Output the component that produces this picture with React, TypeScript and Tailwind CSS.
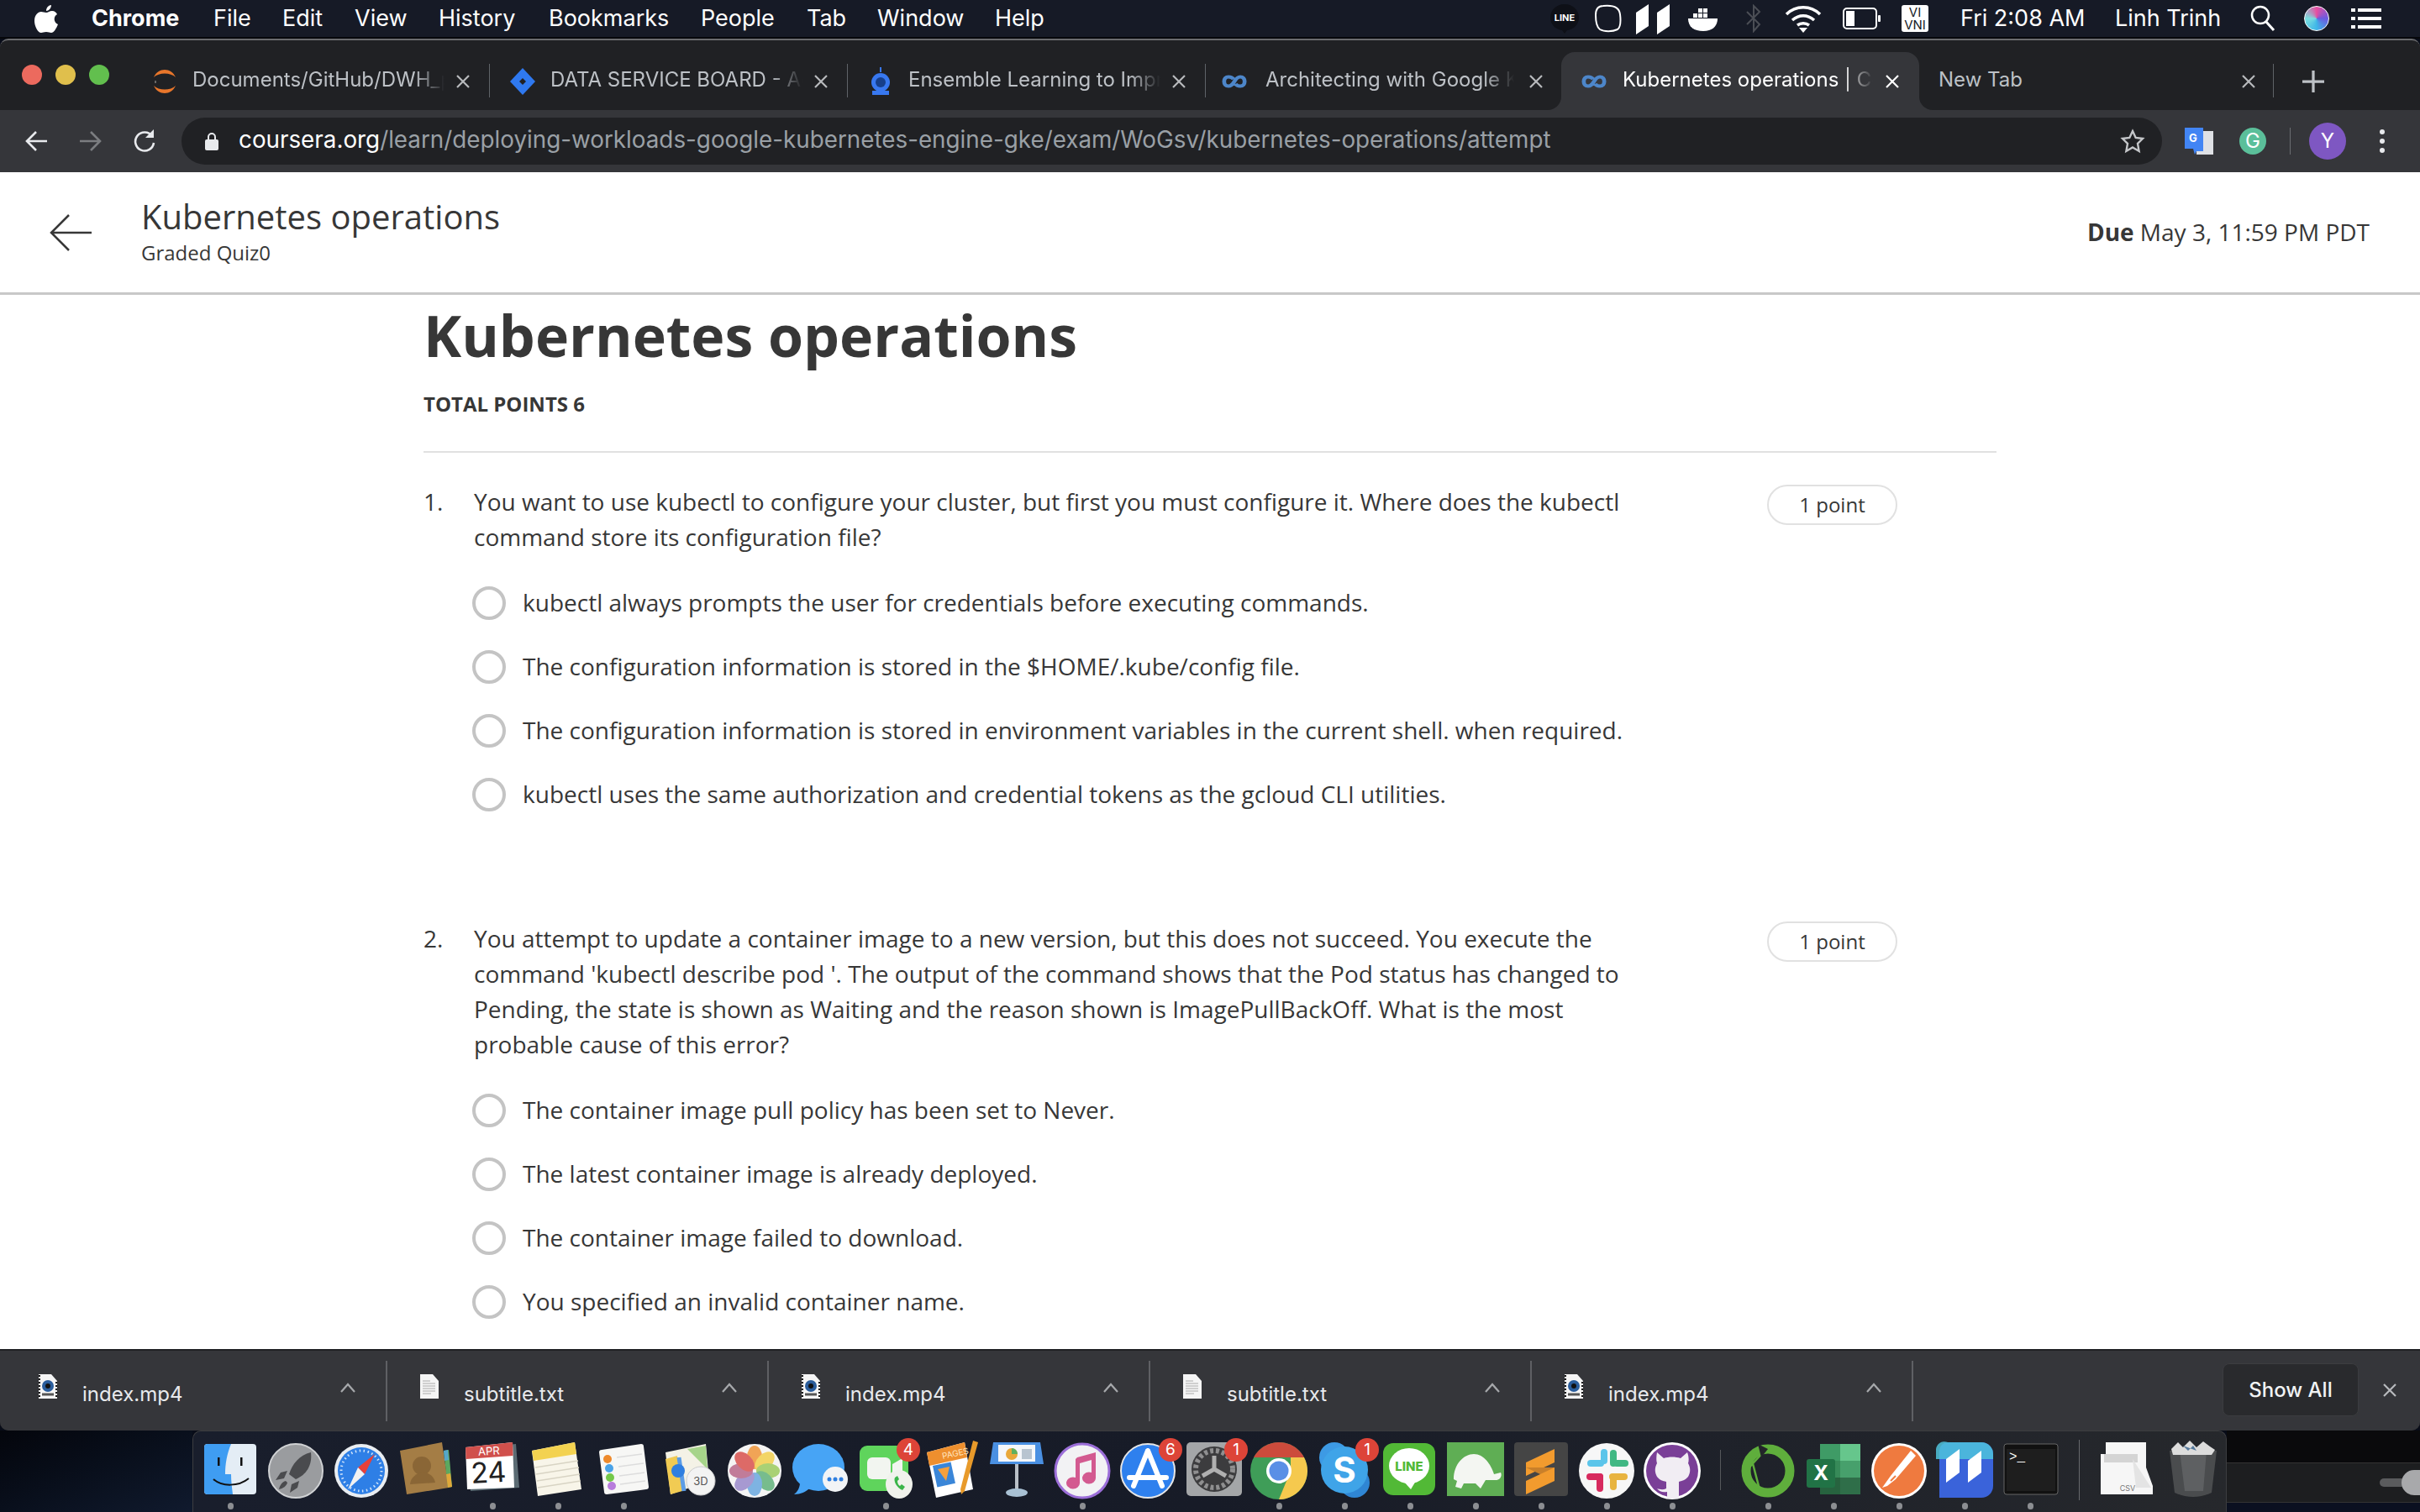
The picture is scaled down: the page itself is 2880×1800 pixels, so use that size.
import type { ReactNode } from 'react'

const sans = 'font-["Inter","Noto_Sans",sans-serif]'

function Ico({ children }: { children: ReactNode }) {
  return <svg viewBox="0 0 68 72" className="w-[68px] h-[72px]">{children}</svg>
}

const dockLeft: { icon: ReactNode; dot?: boolean; badge?: string }[] = [
  { dot: true, icon: <Ico><rect x="3" y="6" width="62" height="60" rx="4" fill="#e4edf5" /><path d="M3 10a4 4 0 0 1 4-4h28c-5 12-7 24-7 36h7c0 8 1 16 2 24H7a4 4 0 0 1-4-4z" fill="#3f9df2" /><path d="M14 48c10 9 30 9 42-1" stroke="#111" strokeWidth="2" fill="none" /><rect x="19" y="22" width="2.5" height="10" fill="#111" /><rect x="46" y="22" width="2.5" height="10" fill="#111" /></Ico> },
  { icon: <Ico><circle cx="34" cy="38" r="32" fill="#9a9c9f" stroke="#d0d2d4" strokeWidth="2" /><path d="M52 16c-14 3-22 14-26 26l8 6c12-5 20-16 18-32zM24 38l-8 2-6 9 10-2zM38 50l-2 8-9 6 2-10zM22 50c-4 1-7 5-8 10 5-1 9-4 10-8z" fill="#4a4b4e" /></Ico> },
  { icon: <Ico><circle cx="34" cy="38" r="32" fill="#e9edf1" /><circle cx="34" cy="38" r="28" fill="#2e7fe6" /><circle cx="34" cy="38" r="24" fill="none" stroke="#cfe3fa" strokeWidth="3" strokeDasharray="1.5 3.5" /><path d="M50 18 30 34l8 8z" fill="#e8403a" /><path d="M18 60 30 34l8 8z" fill="#f2f2f2" /></Ico> },
  { icon: <Ico><path d="M52 4 60 58 10 66 2 14z" fill="#a47d45" /><path d="M54 14l6-1 4 44-5 1z" fill="#5da85f" /><path d="M54 14l5-1 1 12-5 1z" fill="#56a7c9" /><path d="M57 42l5-1 2 16-5 1z" fill="#e0a83a" /><circle cx="28" cy="32" r="11" fill="#8a6636" /><path d="M14 54c1-16 26-20 30-2z" fill="#8a6636" /></Ico> },
  { dot: true, icon: <Ico><path d="M62 6 66 58 8 62 4 12z" fill="#5b6b73" /><path d="M58 4 60 58 4 60 2 10z" fill="#fff" /><path d="M58 4 58.5 20 2.5 24 2 10z" fill="#d0504c" /><text x="30" y="19" fontSize="13" fill="#fff" textAnchor="middle" fontFamily="Inter" transform="rotate(-3 30 19)">APR</text><text x="30" y="52" fontSize="34" fill="#222" textAnchor="middle" fontFamily="Inter" transform="rotate(-3 30 52)">24</text></Ico> },
  { dot: true, icon: <Ico><path d="M54 4 62 60 10 68 3 14z" fill="#f8f5e9" /><path d="M54 4 56 18 5 26 3 14z" fill="#f3d250" /><path d="M7 34 58 26M8 42 59 34M9 50 60 42M10 58 61 50" stroke="#d8d4c4" strokeWidth="1.5" /></Ico> },
  { dot: true, icon: <Ico><path d="M55 6a3 3 0 0 1 3 3l6 48a3 3 0 0 1-3 3L14 66a3 3 0 0 1-3-3L5 16a3 3 0 0 1 3-3z" fill="#f7f7f5" /><circle cx="15" cy="24" r="5" fill="#ee8a2c" /><circle cx="17" cy="35" r="5" fill="#4aa3e8" /><circle cx="18" cy="46" r="5" fill="#74c94a" /><circle cx="20" cy="56" r="5" fill="#b87ddc" /><path d="M26 22 56 18M28 33 58 29M29 44 59 40M30 54 60 50" stroke="#ddd" strokeWidth="1.5" /></Ico> },
  { icon: <Ico><path d="M54 6 58 50 12 66 6 16z" fill="#f4f2e6" /><path d="M32 12 54 8 56 36z" fill="#a6d48a" /><path d="M6 24 20 20 26 62 12 66z" fill="#f1cb53" /><path d="M22 22 28 62" stroke="#5b9ce6" strokeWidth="5" /><circle cx="21" cy="38" r="8" fill="#2f7fe0" /><circle cx="48" cy="50" r="17" fill="#f3f3f3" stroke="#ccc" /><text x="48" y="55" fontSize="13" fill="#555" textAnchor="middle" fontFamily="Inter">3D</text></Ico> },
  { icon: <Ico><circle cx="34" cy="38" r="32" fill="#f4f4f4" /><g opacity=".85"><ellipse cx="34" cy="22" rx="9" ry="14" fill="#f1973b" /><ellipse cx="46" cy="27" rx="9" ry="14" transform="rotate(45 46 27)" fill="#f3d04e" /><ellipse cx="50" cy="38" rx="14" ry="9" fill="#9ccb5f" /><ellipse cx="46" cy="50" rx="9" ry="14" transform="rotate(-45 46 50)" fill="#62b37c" /><ellipse cx="34" cy="54" rx="9" ry="14" fill="#6aa8df" /><ellipse cx="22" cy="50" rx="9" ry="14" transform="rotate(45 22 50)" fill="#9a8acb" /><ellipse cx="18" cy="38" rx="14" ry="9" fill="#b9688a" /><ellipse cx="22" cy="27" rx="9" ry="14" transform="rotate(-45 22 27)" fill="#d9534f" /></g></Ico> },
  { icon: <Ico><ellipse cx="32" cy="34" rx="31" ry="28" fill="#47a4f5" /><path d="M10 52c0 6-3 11-7 14 8 0 14-3 18-7z" fill="#47a4f5" /><circle cx="52" cy="48" r="15" fill="#f2f4f6" /><circle cx="45" cy="48" r="2.5" fill="#2f7fe0" /><circle cx="52" cy="48" r="2.5" fill="#2f7fe0" /><circle cx="59" cy="48" r="2.5" fill="#2f7fe0" /></Ico> },
  { dot: true, badge: '4', icon: <Ico><rect x="3" y="8" width="58" height="54" rx="9" fill="#5fd45c" /><rect x="12" y="22" width="28" height="26" rx="6" fill="#f2f5f0" /><path d="M42 30 54 23V47L42 40z" fill="#f2f5f0" /><ellipse cx="50" cy="54" rx="16" ry="17" fill="#f0f2ec" /><path d="M45 46c-2 4 2 12 9 15l3-4-4-3-2 2c-2-1-3-4-3-6l2-2-2-4z" fill="#3bb54a" /></Ico> },
  { icon: <Ico><path d="M50 4 60 60 16 70 5 16z" fill="#fff" /><path d="M50 4 53 22 8 32 5 16z" fill="#ee8f2e" /><text x="24" y="24" fontSize="10" fill="#ffe3bd" fontFamily="Inter" transform="rotate(-12 24 24)">PAGES</text><rect x="12" y="32" width="22" height="26" fill="#3a86d8" transform="rotate(-12 12 32)" /><path d="M18 36 32 33 28 50z" fill="#f5a03c" /><path d="M60 2 66 4 50 62 46 66 45 60z" fill="#e89a2a" /></Ico> },
  { icon: <Ico><path d="M6 4H62L66 30H2z" fill="#4a90e2" /><rect x="12" y="7" width="44" height="20" fill="#f5f7fa" /><circle cx="28" cy="18" r="7" fill="#e9a83a" /><path d="M28 18V11a7 7 0 0 1 7 7z" fill="#5fb05f" /><rect x="40" y="12" width="12" height="12" fill="#b8c4d0" /><rect x="32" y="30" width="4" height="32" fill="#b9bfc6" /><ellipse cx="34" cy="64" rx="13" ry="5" fill="#a9c1d4" /></Ico> },
  { dot: true, icon: <Ico><circle cx="34" cy="38" r="32" fill="#f2f2f4" stroke="#9b6ed8" strokeWidth="3" /><path d="M28 22 50 16V46a8 7 0 1 1-5-6V25L31 29V52a8 7 0 1 1-5-6V24z" fill="#d35a90" /></Ico> },
  { badge: '6', icon: <Ico><circle cx="34" cy="38" r="32" fill="#2e80ee" stroke="#e6e6e6" strokeWidth="2" /><path d="M34 14 17 56M34 14 51 56M12 46H56" stroke="#fff" strokeWidth="6" strokeLinecap="round" /></Ico> },
  { badge: '1', icon: <Ico><rect x="2" y="4" width="66" height="64" rx="5" fill="#a4a6a8" /><circle cx="35" cy="36" r="27" fill="#3c3c3e" /><circle cx="35" cy="36" r="22" fill="none" stroke="#8f8f90" strokeWidth="6" strokeDasharray="4 3" /><path d="M35 36V20M35 36 21 44M35 36 49 44" stroke="#b0b0b0" strokeWidth="5" /></Ico> },
  { dot: true, icon: <Ico><circle cx="34" cy="38" r="34" fill="#3f9d58" /><path d="M4 22A34 34 0 0 1 64 22H34z" fill="#cc4b3c" /><path d="M64 22A34 34 0 0 1 34 72L48 38V22z" fill="#f5c94e" /><circle cx="34" cy="38" r="15" fill="#fff" /><circle cx="34" cy="38" r="11.5" fill="#5a8fe6" /></Ico> },
  { dot: true, badge: '1', icon: <Ico><circle cx="22" cy="22" r="18" fill="#3d9ae4" /><circle cx="46" cy="52" r="18" fill="#2f86d4" /><circle cx="34" cy="37" r="28" fill="#3fa4e8" /><text x="34" y="52" fontSize="42" fontWeight="700" fill="#fff" textAnchor="middle" fontFamily="Inter">S</text></Ico> },
  { dot: true, icon: <Ico><rect x="2" y="5" width="62" height="62" rx="12" fill="#52b936" /><ellipse cx="33" cy="32" rx="24" ry="21" fill="#fff" /><path d="M26 50l9 10 6-10z" fill="#fff" /><text x="33" y="38" fontSize="15" fontWeight="800" fill="#52b936" textAnchor="middle" fontFamily="Inter">LINE</text></Ico> },
  { dot: true, icon: <Ico><rect y="4" width="68" height="64" fill="#5fae54" /><path d="M8 48c0-18 12-30 24-30s20 12 24 24l8-2c2 4-1 9-6 9H46l-6 10-6-6H20l-3 6-7-2 2-7z" fill="#f4f6f2" /></Ico> },
  { dot: true, icon: <Ico><rect x="2" y="4" width="64" height="64" rx="4" fill="#454545" /><path d="M16 28 50 12V28L16 44z" fill="#f29b2e" /><path d="M16 34 50 34V50z" fill="#c9802a" /><path d="M16 50 50 34V50L16 66z" fill="#f29b2e" /></Ico> },
  { dot: true, icon: <Ico><circle cx="34" cy="38" r="33" fill="#f7f7f7" /><rect x="11" y="25" width="20" height="8" rx="4" fill="#5cc5ea" /><rect x="27" y="12" width="8" height="18" rx="4" fill="#5cc5ea" /><rect x="38" y="13" width="8" height="20" rx="4" fill="#41b883" /><rect x="42" y="25" width="18" height="8" rx="4" fill="#41b883" /><rect x="37" y="41" width="22" height="8" rx="4" fill="#e8b440" /><rect x="38" y="45" width="8" height="16" rx="4" fill="#e8b440" /><rect x="10" y="41" width="20" height="8" rx="4" fill="#d72a5e" /><rect x="22" y="41" width="8" height="22" rx="4" fill="#d72a5e" /></Ico> },
  { dot: true, icon: <Ico><circle cx="34" cy="38" r="34" fill="#fff" /><circle cx="34" cy="38" r="31" fill="#7a3f97" /><path d="M16 16l8 7c6-2 14-2 20 0l8-7c2 5 2 10 1 13 3 5 3 11 0 16-3 4-8 5-11 6v20H28v-8c-5 1-9 0-12-4 3 1 7 2 11 0v-8c-4-1-8-2-11-6-3-5-3-11 0-16-1-3-1-8 0-13z" fill="#f1edf3" /></Ico> },
]

const dockRight: { icon: ReactNode; dot?: boolean }[] = [
  { dot: true, icon: <Ico><circle cx="34" cy="38" r="26" fill="none" stroke="#5fae3c" strokeWidth="11" /><path d="M8 26 34 8M6 44 26 66M14 22 24 60M8 38 30 14" stroke="#5fae3c" strokeWidth="2.5" /><path d="M22 6 34 12 26 22z" fill="#232529" /></Ico> },
  { dot: true, icon: <Ico><path d="M18 6H64a2 2 0 0 1 2 2V64a2 2 0 0 1-2 2H18z" fill="#378a59" /><rect x="42" y="6" width="24" height="20" fill="#66c68c" /><rect x="18" y="6" width="24" height="20" fill="#3f9b66" /><rect x="42" y="26" width="24" height="20" fill="#47a06c" /><rect x="42" y="46" width="24" height="20" fill="#2f6e49" /><rect x="18" y="46" width="24" height="20" fill="#27633f" /><rect x="2" y="24" width="34" height="34" rx="3" fill="#217346" /><text x="19" y="49" fontSize="24" fontWeight="700" fill="#fff" textAnchor="middle" fontFamily="Inter">X</text></Ico> },
  { dot: true, icon: <Ico><circle cx="34" cy="38" r="33" fill="#fff" /><circle cx="34" cy="38" r="30" fill="#ef7a3f" /><path d="M48 14 54 20 30 48 20 56 14 58 24 44z" fill="#fff" /><path d="M24 50 30 44" stroke="#ef7a3f" strokeWidth="2" /></Ico> },
  { dot: true, icon: <Ico><path d="M14 4H54a14 14 0 0 1 14 14V56a14 14 0 0 1-14 14H4V14A10 10 0 0 1 14 4z" fill="#3a63da" /><path d="M14 4H54a14 14 0 0 1 14 14V24H0V14A10 10 0 0 1 14 4z" fill="#4fc3dc" opacity=".85" /><path d="M12 52V24L28 12V40zM38 52V26L54 14V40z" fill="#fff" /></Ico> },
  { dot: true, icon: <Ico><rect x="3" y="6" width="64" height="60" rx="3" fill="#111" stroke="#666" /><rect x="6" y="12" width="58" height="50" fill="#1e1e1e" /><text x="9" y="26" fontSize="16" fill="#fff" fontFamily="Liberation Mono">&gt;_</text></Ico> },
]

const dockTail: ReactNode[] = [
  <Ico key="csv"><path d="M8 4H56V34L64 56V66H2V18H8z" fill="#f6f6f6" /><path d="M6 18H46V28H6z" fill="#d4d4d4" /><path d="M40 24 62 58H44z" fill="#e4e4e4" /><text x="34" y="62" fontSize="9" fill="#777" textAnchor="middle" fontFamily="Inter">CSV</text></Ico>,
  <Ico key="trash"><path d="M6 14H62L56 64Q34 74 12 64z" fill="#4a4c4e" /><path d="M18 14H50L46 62H24z" fill="#5e6062" /><path d="M8 12 16 4l6 6 8-8 8 8 8-7 8 6 6 4-4 6H10z" fill="#dcdcdc" /><path d="M22 8l6 6 6-6 4 6z" fill="#55799c" /></Ico>,
]

function Dock() {
  return (
    <div className="w-[2421px] h-full flex pl-[5px] rounded-tl-[10px] rounded-tr-[10px] border-t border-x border-[#3c3d40] bg-gradient-to-r from-[#191e2c] via-[#171b27] to-[#26282c]">
      {dockLeft.map((d, i) => <DockItem key={i} {...d} />)}
      <div className="w-[36px] flex justify-center pt-[22px]"><div className="w-[1px] h-[48px] bg-[#55575b]" /></div>
      {dockRight.map((d, i) => <DockItem key={i} {...d} />)}
      <div className="w-[38px] flex justify-center pt-[10px]"><div className="w-[1px] h-[72px] bg-[#66686c]" /></div>
      {dockTail.map((icon, i) => <DockItem key={i} icon={icon} />)}
    </div>
  )
}

function DockItem({ icon, dot, badge }: { icon: ReactNode; dot?: boolean; badge?: string }) {
  return (
    <div className="relative w-[78px] flex flex-col items-center pt-[9px]">
      {icon}
      {dot && <div className="absolute bottom-[3px] w-[7px] h-[8px] rounded-full bg-[#8c8e92]" />}
      {badge && <div className={`absolute top-[8px] right-[-2px] w-[28px] h-[28px] rounded-full bg-[#dd4438] text-white text-[19px] leading-[28px] text-center ${sans}`}>{badge}</div>}
    </div>
  )
}

function StatusIcons() {
  return (
    <div className="flex items-center">
      <svg viewBox="0 0 36 38" className="w-[36px] h-[38px]"><path d="M18 2C8 2 1 9 1 18c0 8 6 14 14 15l3 4 3-4c8-1 14-7 14-15C35 9 28 2 18 2z" fill="#0e1017" /><text x="18" y="22" fontSize="11" fontWeight="700" fill="#fff" textAnchor="middle" fontFamily="Inter">LINE</text></svg>
      <svg viewBox="0 0 36 34" className="w-[36px] h-[34px] ml-[16px]"><path d="M12 2c10-1 19 1 20 10 1 8 1 15-3 18-6 3-16 3-21 0C4 27 3 20 3 13 3 6 6 2 12 2z" fill="none" stroke="#fff" strokeWidth="2" /></svg>
      <svg viewBox="0 0 42 38" className="w-[42px] h-[38px] ml-[14px]"><path d="M1 12 16 2V28L1 38zM26 12 41 2V28L26 38z" fill="#fff" /></svg>
      <svg viewBox="0 0 40 32" className="w-[40px] h-[32px] ml-[19px]"><path d="M2 16h35c0 10-7 15-17 15C9 31 2 26 2 16z" fill="#fff" /><path d="M8 10h5v5H8zM14 10h5v5h-5zM20 10h5v5h-5zM14 4h5v5h-5zM20 4h5v5h-5z" fill="#fff" /></svg>
      <svg viewBox="0 0 20 34" className="w-[20px] h-[34px] ml-[30px]"><path d="M2 9 17 24 10 32V2l7 7L2 24" fill="none" stroke="#4b4e55" strokeWidth="2" /></svg>
      <svg viewBox="0 0 44 36" className="w-[44px] h-[36px] ml-[27px]"><path d="M2 13C13 2 31 2 42 13M9 20c8-7 18-7 26 0M15 26c4-3 10-3 14 0" fill="none" stroke="#fff" strokeWidth="3.500" /><path d="M17 29h10l-5 6z" fill="#fff" /></svg>
      <svg viewBox="0 0 46 26" className="w-[46px] h-[26px] ml-[25px]"><rect x="1" y="1" width="39" height="24" rx="4" fill="none" stroke="#fff" strokeWidth="2" /><rect x="4" y="4" width="10" height="18" fill="#fff" /><rect x="42" y="9" width="3" height="8" rx="1" fill="#fff" /></svg>
      <div className={`w-[32px] h-[32px] ml-[24px] rounded-[3px] bg-white text-[#161a26] text-[15px] leading-[15px] text-center pt-[1px] ${sans}`}>VI<br />VNI</div>
    </div>
  )
}

function MenuBar() {
  return (
    <div className={`h-[46px] shrink-0 bg-[#161a26] border-b-[2px] border-[#06070b] flex items-center text-white text-[27px] ${sans}`}>
      <svg viewBox="0 0 28 34" className="w-[28px] h-[34px] ml-[41px]"><path d="M20 1c0 4-3 7-6 7 0-4 3-7 6-7zM14 10c2 0 4-2 7-2 3 0 5 2 6 4-5 3-4 10 1 12-2 5-5 10-8 10-2 0-3-1-6-1s-4 1-6 1C4 34 0 26 0 20 0 13 4 9 8 9c2 0 4 1 6 1z" fill="#fff" /></svg>
      <span className="ml-[40px] font-bold w-[145px]">Chrome</span>
      <span className="w-[82px]">File</span>
      <span className="w-[86px]">Edit</span>
      <span className="w-[100px]">View</span>
      <span className="w-[131px]">History</span>
      <span className="w-[181px]">Bookmarks</span>
      <span className="w-[126px]">People</span>
      <span className="w-[84px]">Tab</span>
      <span className="w-[140px]">Window</span>
      <span className="w-[660px]">Help</span>
      <StatusIcons />
      <span className="ml-[38px] w-[184px]">Fri 2:08 AM</span>
      <span className="w-[161px]">Linh Trinh</span>
      <svg viewBox="0 0 30 32" className="w-[30px] h-[32px]"><circle cx="12" cy="12" r="10" fill="none" stroke="#fff" strokeWidth="2.500" /><path d="M19 20 28 30" stroke="#fff" strokeWidth="3" /></svg>
      <div className="ml-[34px] w-[30px] h-[30px] rounded-full border border-white bg-[conic-gradient(#e84ea0,#6a5ae0,#3fb6e8,#7adfe0,#e84ea0)]" />
      <svg viewBox="0 0 36 26" className="w-[36px] h-[26px] ml-[26px]"><path d="M0 1h5v4H0zM8 1h28v4H8zM0 11h5v4H0zM8 11h28v4H8zM0 21h5v4H0zM8 21h28v4H8z" fill="#fff" /></svg>
    </div>
  )
}

function Infinity2() {
  return <svg viewBox="0 0 32 20" preserveAspectRatio="none" className="w-[30px] h-[16px]"><path d="M15 6.500C13 3 10 3 8.500 3 5 3 3 6 3 10s2 7 5.500 7c4 0 6-4 7.500-7s3.500-7 7.500-7c3.500 0 5.500 3 5.500 7s-2 7-5.500 7c-1.500 0-4.500 0-6-3.500" fill="none" stroke="#4d86c9" strokeWidth="5" /></svg>
}

function X({ color = '#b8babd' }: { color?: string }) {
  return <svg viewBox="0 0 18 18" className="w-[18px] h-[18px]"><path d="M2 2 16 16M16 2 2 16" stroke={color} strokeWidth="2.200" /></svg>
}

const fade = '[mask-image:linear-gradient(to_right,black_88%,transparent)]'

function Tab({ icon, title }: { icon: ReactNode; title: string }) {
  return (
    <div className="relative w-[426px] h-full flex items-center">
      <div className="w-[72px] flex justify-center pl-[6px]">{icon}</div>
      <div className={`w-[300px] whitespace-nowrap overflow-hidden text-[#bdc1c6] -mt-[3px] ${fade}`}>{title}</div>
      <div className="ml-[13px]"><X /></div>
      <div className="absolute right-0 top-[14px] h-[40px] w-[1px] bg-[#5f6368]" />
    </div>
  )
}

function TabStrip() {
  return (
    <div className={`h-[83px] shrink-0 flex items-end text-[24px] ${sans}`}>
      <div className="w-[157px] h-[83px] flex items-center pl-[26px] gap-[16px] pb-[2px]">
        <div className="w-[24px] h-[24px] rounded-full bg-[#ec6a5e]" />
        <div className="w-[24px] h-[24px] rounded-full bg-[#e0bf4c]" />
        <div className="w-[24px] h-[24px] rounded-full bg-[#62bf4e]" />
      </div>
      <div className="h-[83px] flex pt-[14px]">
        <Tab title="Documents/GitHub/DWH_project" icon={<svg viewBox="0 0 32 32" className="w-[32px] h-[32px]"><path d="M3 11C8-1 24-1 29 11 23 5 9 5 3 11zM3 21C8 33 24 33 29 21 23 27 9 27 3 21z" fill="#e8762b" /><path d="M4 15h2v3H4z" fill="#666" /></svg>} />
        <Tab title="DATA SERVICE BOARD - Agile" icon={<svg viewBox="0 0 32 32" className="w-[32px] h-[32px]"><path d="M16 0 31 16 16 32 1 16z" fill="#2f79f0" /><path d="M16 12l4 4-4 4-4-4z" fill="#202124" /></svg>} />
        <Tab title="Ensemble Learning to Improve" icon={<svg viewBox="0 0 24 34" className="w-[24px] h-[34px]"><path d="M12 0v6" stroke="#3878f0" strokeWidth="2" /><circle cx="12" cy="18" r="11" fill="#3878f0" /><circle cx="12" cy="18" r="6" fill="#173f8a" /><rect x="2" y="28" width="20" height="5" fill="#3878f0" /></svg>} />
        <div className="relative w-[423px] h-full flex items-center">
          <div className="w-[71px] pl-[19px]"><Infinity2 /></div>
          <div className={`w-[296px] whitespace-nowrap overflow-hidden text-[#bdc1c6] -mt-[3px] ${fade}`}>Architecting with Google Kubernetes</div>
          <div className="ml-[17px]"><X /></div>
        </div>
        <div className="relative w-[426px] h-full flex items-center rounded-t-[16px] bg-[#35363a]">
          <div className="absolute left-[-16px] bottom-0 w-[16px] h-[16px] bg-[#35363a]"><div className="w-full h-full rounded-br-[16px] bg-[#202124]" /></div>
          <div className="absolute right-[-16px] bottom-0 w-[16px] h-[16px] bg-[#35363a]"><div className="w-full h-full rounded-bl-[16px] bg-[#202124]" /></div>
          <div className="w-[73px] pl-[24px]"><Infinity2 /></div>
          <div className={`w-[298px] whitespace-nowrap overflow-hidden text-white -mt-[3px] ${fade}`}>Kubernetes operations | Coursera</div>
          <div className="ml-[14px]"><X color="#fff" /></div>
        </div>
        <div className="relative w-[422px] h-full flex items-center pl-[23px]">
          <div className="w-[360px] text-[#bdc1c6] -mt-[3px]">New Tab</div>
          <X />
          <div className="absolute right-0 top-[14px] h-[40px] w-[1px] bg-[#5f6368]" />
        </div>
        <div className="h-full flex items-center pl-[34px]"><svg viewBox="0 0 24 24" className="w-[26px] h-[26px]"><path d="M12 0v24M0 12h24" stroke="#bdc1c6" strokeWidth="3" /></svg></div>
      </div>
    </div>
  )
}

function Toolbar() {
  return (
    <div className={`h-[74px] shrink-0 bg-[#35363a] flex items-center ${sans}`}>
      <svg viewBox="0 0 28 28" className="w-[28px] h-[28px] ml-[29px]"><path d="M27 14H3M14 3 3 14l11 11" fill="none" stroke="#e8eaed" strokeWidth="2.600" /></svg>
      <svg viewBox="0 0 28 28" className="w-[28px] h-[28px] ml-[37px]"><path d="M1 14h24M14 3l11 11-11 11" fill="none" stroke="#7b7d80" strokeWidth="2.600" /></svg>
      <svg viewBox="0 0 28 30" className="w-[28px] h-[30px] ml-[36px]"><path d="M23 9A11 11 0 1 0 25 17" fill="none" stroke="#e8eaed" strokeWidth="2.600" /><path d="M25 1V11H15z" fill="#e8eaed" /></svg>
      <div className="ml-[30px] w-[2357px] h-[56px] rounded-full bg-[#202124] flex items-center text-[27.8px]">
        <svg viewBox="0 0 18 22" className="w-[18px] h-[22px] ml-[27px]"><rect x="1" y="9" width="16" height="13" rx="2" fill="#e8eaed" /><path d="M5 9V6a4 4 0 0 1 8 0v3" fill="none" stroke="#e8eaed" strokeWidth="2" /></svg>
        <span className="ml-[23px] w-[2239px] whitespace-nowrap -mt-[2px]"><span className="text-white">coursera.org</span><span className="text-[#9aa0a6]">/learn/deploying-workloads-google-kubernetes-engine-gke/exam/WoGsv/kubernetes-operations/attempt</span></span>
        <svg viewBox="0 0 30 30" className="w-[30px] h-[30px]"><path d="M15 3l3.700 8 8.300 1-6 6 1.600 9L15 22.500 7.400 27 9 18l-6-6 8.300-1z" fill="none" stroke="#c4c6c9" strokeWidth="2.400" /></svg>
      </div>
      <svg viewBox="0 0 34 32" className="w-[34px] h-[32px] ml-[27px]"><rect x="14" y="4" width="20" height="28" fill="#dfe1e5" /><path d="M0 0H22V28H14L12 32 10 25H0z" fill="#4285f4" /><text x="10" y="17" fontSize="13" fontWeight="700" fill="#fff" textAnchor="middle" fontFamily="Inter">G</text></svg>
      <div className="ml-[31px] w-[32px] h-[32px] rounded-full bg-[#5bbf9a] flex items-center justify-center text-white text-[24px]">G</div>
      <div className="ml-[28px] w-[1px] h-[32px] bg-[#6a6c70]" />
      <div className="ml-[22px] w-[44px] h-[44px] rounded-full bg-[#7e57c2] flex items-center justify-center text-white text-[24px]">Y</div>
      <div className="ml-[40px] flex flex-col gap-[5px]"><div className="w-[6px] h-[6px] rounded-full bg-[#e8eaed]" /><div className="w-[6px] h-[6px] rounded-full bg-[#e8eaed]" /><div className="w-[6px] h-[6px] rounded-full bg-[#e8eaed]" /></div>
    </div>
  )
}

function Question({ n, lines, options, className = '' }: { n: number; lines: string[]; options: string[]; className?: string }) {
  return (
    <div className={`relative ${className}`}>
      <div className="flex">
        <div className="w-[60px] text-[28px] leading-[42px]">{n}.</div>
        <div className="w-[1539px] text-[28px] leading-[42px]">{lines.map(l => <div key={l}>{l}</div>)}</div>
        <div className="w-[155px] h-[48px] rounded-full border-[2px] border-[#e1e1e1] flex items-center justify-center text-[24px] mt-[1px]">1 point</div>
      </div>
      <div className="mt-[19px] pl-[58px]">
        {options.map(o => (
          <div key={o} className="h-[76px] flex items-center text-[28px]">
            <div className="w-[40px] h-[40px] rounded-full border-[4px] border-[#c4c4c4] mr-[20px] shrink-0 mt-[1px]" />
            {o}
          </div>
        ))}
      </div>
    </div>
  )
}

function Page() {
  return (
    <div className='flex-1 bg-white overflow-hidden text-[#373737] font-["Open_Sans",sans-serif]'>
      <div className="h-[146px] border-b-[3px] border-[#c8c8c8] flex items-center">
        <svg viewBox="0 0 50 44" className="w-[50px] h-[44px] ml-[59px]"><path d="M50 22H2M23 1 2 22l21 21" fill="none" stroke="#373737" strokeWidth="2.500" /></svg>
        <div className="ml-[59px] flex-1 pb-[4px]">
          <div className="text-[40px] leading-[52px]">Kubernetes operations</div>
          <div className="text-[24px] leading-[34px]">Graded Quiz0</div>
        </div>
        <div className="text-[28px] mr-[60px] pb-[2px]"><span className="font-bold">Due</span> May 3, 11:59 PM PDT</div>
      </div>
      <div className="ml-[504px] w-[1872px]">
        <h1 className="text-[68px] leading-[96px] font-bold">Kubernetes operations</h1>
        <div className="mt-[18px] text-[24px] leading-[32px] font-bold">TOTAL POINTS 6</div>
        <div className="mt-[40px] h-[2px] bg-[#e1e1e1]" />
        <Question className="mt-[37px]" n={1} lines={['You want to use kubectl to configure your cluster, but first you must configure it. Where does the kubectl', 'command store its configuration file?']} options={['kubectl always prompts the user for credentials before executing commands.', 'The configuration information is stored in the $HOME/.kube/config file.', 'The configuration information is stored in environment variables in the current shell. when required.', 'kubectl uses the same authorization and credential tokens as the gcloud CLI utilities.']} />
        <Question className="mt-[113px]" n={2} lines={['You attempt to update a container image to a new version, but this does not succeed. You execute the', "command 'kubectl describe pod '. The output of the command shows that the Pod status has changed to", 'Pending, the state is shown as Waiting and the reason shown is ImagePullBackOff. What is the most', 'probable cause of this error?']} options={['The container image pull policy has been set to Never.', 'The latest container image is already deployed.', 'The container image failed to download.', 'You specified an invalid container name.']} />
      </div>
    </div>
  )
}

function FileIcon({ video }: { video?: boolean }) {
  return (
    <svg viewBox="0 0 22 29" className="w-[22px] h-[29px]">
      <path d="M0 0H15L22 8V29H0z" fill="#f5f5f5" />
      {video ? <><circle cx="11" cy="14" r="7" fill="#2a5d9c" /><circle cx="11" cy="14" r="3" fill="#111" /><path d="M1 1v27M21 9v19" stroke="#111" strokeWidth="2" strokeDasharray="2 2" /><path d="M4 24h14" stroke="#555" strokeWidth="3" /></> : <path d="M3 8h9M3 11h15M3 14h15M3 17h15M3 20h15M3 23h10" stroke="#aaa" strokeWidth="1" />}
    </svg>
  )
}

function DownloadItem({ name, video }: { name: string; video?: boolean }) {
  return (
    <div className="w-[454px] h-[72px] shrink-0 flex items-center border-r-[2px] border-[#5f6064] relative">
      <div className="ml-[39px] -mt-[10px] w-[22px] h-[29px]"><FileIcon video={video} /></div>
      <span className="ml-[30px] w-[306px] text-[24px] text-[#e8eaed] mt-[8px]">{name}</span>
      <svg viewBox="0 0 20 12" className="w-[20px] h-[12px] -mt-[8px]"><path d="M2 11 10 2l8 9" fill="none" stroke="#a6a8ab" strokeWidth="2.200" /></svg>
    </div>
  )
}

function DownloadBar() {
  return (
    <div className={`h-[97px] shrink-0 bg-[#35363a] border-t-[2px] border-[#202124] flex items-center pl-[7px] ${sans}`}>
      <DownloadItem name="index.mp4" video />
      <DownloadItem name="subtitle.txt" />
      <DownloadItem name="index.mp4" video />
      <DownloadItem name="subtitle.txt" />
      <DownloadItem name="index.mp4" video />
      <button className="ml-[368px] w-[162px] h-[63px] -mt-[2px] rounded-[8px] bg-[#292a2d] border border-[#3c3d40] text-[#f1f3f4] text-[24px] font-medium">Show All</button>
      <div className="ml-[28px] -mt-[2px]"><X /></div>
    </div>
  )
}

export default function App() {
  return (
    <div className="w-[2880px] h-[1800px] overflow-hidden flex flex-col bg-[#080c18]">
      <MenuBar />
      <div className="h-[1657px] shrink-0 flex flex-col rounded-[10px] overflow-hidden border-t-[2px] border-[#6a6b6e] bg-[#202124]">
        <TabStrip />
        <Toolbar />
        <Page />
        <DownloadBar />
      </div>
      <div className="flex-1 flex">
        <div className="w-[229px] bg-gradient-to-br from-[#04060c] to-[#101a2e]" />
        <Dock />
        <div className="flex-1 flex flex-col bg-[#0a0a0c]">
          <div className="h-[38px]" />
          <div className="h-[48px] border-y border-[#333] bg-[#1d1e20] flex items-center justify-end">
            <div className="relative w-[48px] h-[10px] rounded-l-full bg-[#5a5b5d]"><div className="absolute right-0 top-[-10px] w-[22px] h-[30px] rounded-l-full bg-[#a8a9ab]" /></div>
          </div>
          <div className="flex-1 bg-[#0b1020]" />
        </div>
      </div>
    </div>
  )
}
